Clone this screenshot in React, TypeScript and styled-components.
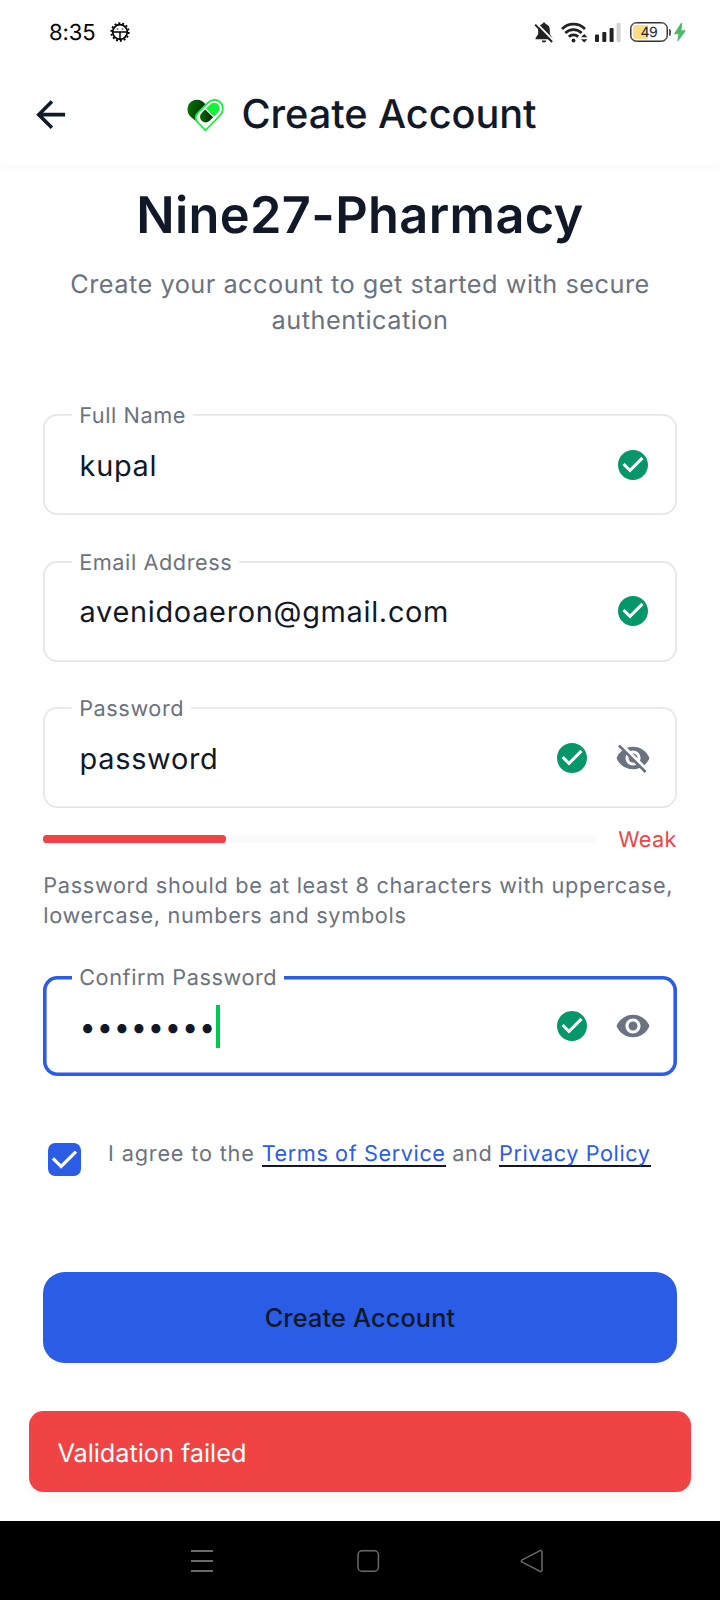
import React from 'react';
import styled, { createGlobalStyle } from 'styled-components';
import { MdArrowBack, MdCheckCircle, MdVisibility, MdVisibilityOff } from 'react-icons/md';

const ink = '#111827';
const muted = '#6b7280';
const blue = '#2a5ce6';
const red = '#f04444';
const green = '#059669';
const surface = '#ffffff';

const GlobalStyle = createGlobalStyle`
  * { box-sizing: border-box; }
  body {
    margin: 0;
    background: ${surface};
    font-family: Inter, "Liberation Sans", sans-serif;
    font-weight: 400;
    color: ${ink};
    text-rendering: geometricPrecision;
  }
`;

const Screen = styled.div`
  width: 720px;
  height: 1600px;
  display: flex;
  flex-direction: column;
  overflow: hidden;
  background: ${surface};
`;

const StatusBar = styled.header`
  height: 64px;
  flex: none;
  display: flex;
  align-items: center;
  justify-content: space-between;
  padding: 0 34px 0 49px;
  color: #000;
`;

const StatusGroup = styled.div<{ $gap: number }>`
  display: flex;
  align-items: center;
  gap: ${p => p.$gap}px;
`;

const Clock = styled.span`
  font-size: 22px;
  letter-spacing: -0.1px;
  padding-top: 1px;
`;

const AppBar = styled.div`
  height: 101px;
  flex: none;
  display: grid;
  grid-template-columns: 100px 1fr 100px;
  align-items: center;
  background: ${surface};
  box-shadow: 0 4px 6px rgba(0, 0, 0, 0.025);
`;

const BackButton = styled.button`
  display: flex;
  margin: 0 0 0 28.6px;
  padding: 0;
  border: 0;
  background: none;
  color: ${ink};
`;

const Brand = styled.div`
  display: flex;
  align-items: center;
  justify-content: center;
  padding-left: 4px;
  padding-top: 1px;
  gap: 17px;
`;

const BarTitle = styled.h1`
  margin: -2px 0 0;
  font-size: 39.7px;
  line-height: 50px;
  font-weight: 500;
  letter-spacing: -0.05px;
`;

const Form = styled.main`
  flex: 1;
  display: flex;
  flex-direction: column;
  padding: 21px 43.3px 0;
`;

const Heading = styled.h2`
  margin: 0;
  text-align: center;
  font-size: 50.5px;
  line-height: 60px;
  font-weight: 600;
  letter-spacing: 0.35px;
`;

const Intro = styled.p`
  margin: 20.5px 0 75.5px;
  text-align: center;
  font-size: 25.3px;
  line-height: 36px;
  letter-spacing: 0.5px;
  color: ${muted};
`;

const Field = styled.div<{ $focused?: boolean }>`
  position: relative;
  flex: none;
  height: ${p => (p.$focused ? 100 : 101)}px;
  display: flex;
  align-items: center;
  padding: 0 25.3px 0 36.3px;
  border-radius: 14.4px;
  box-shadow: inset 0 0 0 ${p => (p.$focused ? `3.6px ${blue}` : '1.8px #e5e7eb')};
`;

const FieldLabel = styled.label`
  position: absolute;
  top: -11px;
  left: 28.7px;
  padding: 0 7.2px;
  background: ${surface};
  font-size: 21.7px;
  line-height: 26px;
  letter-spacing: 0.57px;
  color: ${muted};
`;

const Value = styled.span`
  flex: 1;
  display: flex;
  align-items: center;
  padding-top: 2px;
  font-size: 28.9px;
  line-height: 40px;
  letter-spacing: 0.7px;
`;

const Dots = styled.span`
  letter-spacing: 0.8px;
`;

const Caret = styled.i`
  width: 3.6px;
  height: 43px;
  margin-top: -2px;
  background: #00c853;
`;

const FieldIcons = styled.span`
  display: flex;
  align-items: center;
  gap: 25px;
  color: ${muted};
`;

const ValidIcon = styled(MdCheckCircle)`
  color: ${green};
`;

const Gap = styled.div<{ $size: number }>`
  flex: none;
  height: ${p => p.$size}px;
`;

const Strength = styled.div`
  display: flex;
  align-items: center;
  justify-content: space-between;
  height: 26px;
`;

const Track = styled.div`
  width: 553px;
  height: 7.6px;
  border-radius: 3.6px;
  background: #fafafa;
`;

const Level = styled.div`
  width: 33%;
  height: 100%;
  border-radius: 3.6px;
  background: ${red};
`;

const StrengthText = styled.span`
  padding-top: 1px;
  font-size: 21.7px;
  letter-spacing: 0.3px;
  color: ${red};
`;

const Hint = styled.p`
  margin: 19px -8px 0 0;
  font-size: 21.7px;
  line-height: 30px;
  letter-spacing: 0.67px;
  color: ${muted};
`;

const Agreement = styled.div`
  display: flex;
  align-items: flex-start;
  padding-left: 5.2px;
`;

const Checkbox = styled.span`
  width: 32.6px;
  height: 32.6px;
  display: flex;
  border-radius: 7.2px;
  background: ${blue};
`;

const AgreementText = styled.span`
  margin: -2px 0 0 27px;
  font-size: 21.7px;
  line-height: 26px;
  letter-spacing: 0.58px;
  color: ${muted};
`;

const AgreementLead = styled.span`
  letter-spacing: 0.82px;
`;

const Link = styled.a`
  display: inline-block;
  height: 26px;
  color: ${blue};
  border-bottom: 2px solid ${ink};
`;

const Submit = styled.button`
  flex: none;
  height: 91px;
  padding: 0;
  border: 0;
  border-radius: 21.6px;
  background: ${blue};
  color: ${ink};
  font: 500 25.3px Inter, "Liberation Sans", sans-serif;
  letter-spacing: 0.15px;
`;

const Snackbar = styled.div`
  flex: none;
  display: flex;
  align-items: center;
  height: 81px;
  margin: 0 -14.4px;
  padding: 3px 28.5px 0;
  border-radius: 14.4px;
  background: ${red};
  color: #fefefe;
  font-size: 25.3px;
  letter-spacing: -0.04px;
  box-shadow: 0 6px 12px rgba(0, 0, 0, 0.03);
`;

const NavBar = styled.nav`
  flex: none;
  height: 79px;
  display: flex;
  align-items: center;
  padding-left: 190px;
  gap: 142px;
  background: #000;

  svg:last-child { margin-left: -2px; }
`;

const GearIcon = () => (
  <svg width="20" height="20" viewBox="0 0 20 20" fill="none" stroke="#000">
    <circle cx="10" cy="10" r="7.3" strokeWidth="1.7" />
    <circle cx="10" cy="10" r="8.8" strokeWidth="1.7" strokeDasharray="2 1.949" />
    <path d="M2.6 9.900h14.8M10 9.900v8" strokeWidth="1.5" />
    <path d="M6.700 7h1.6M11.700 7h1.6" strokeWidth="1" />
  </svg>
);

const MutedBellIcon = () => (
  <svg width="20" height="21" viewBox="0 0 20 21">
    <path d="M10 .5c1 0 1.5.6 1.5 1.5 2.8.6 4.3 2.8 4.3 5.7v4.3l2.7 4.200v1H1.500v-1l2.700-4.200V7.700C4.200 4.800 5.700 2.600 8.500 2 8.500 1.100 9 .5 10 .5zM7.800 18.500h4.400a2.200 2 0 0 1-4.400 0z" fill="#222" />
    <path d="M2.600 1.400l17 17.400" stroke={surface} strokeWidth="2" />
    <path d="M1.100 2.600l17 17.400" stroke="#222" strokeWidth="2" />
  </svg>
);

const WifiIcon = () => (
  <svg width="27" height="21" viewBox="0 0 27 21" fill="none" stroke="#222">
    <path d="M1 7a16 16 0 0 1 23 0M4.300 11a11.500 11.500 0 0 1 16.400 0M7.800 14.700a6.800 6.800 0 0 1 9.400 0" strokeWidth="2.700" />
    <circle cx="12.500" cy="18.500" r="1.900" fill="#222" stroke="none" />
    <path d="M18.800 12h8.200v9h-8.200z" fill={surface} stroke="none" />
    <path d="M20 15.300l3.200-3.400 3.200 3.400zM20 17.200l3.200 3.400 3.200-3.400z" fill="#222" stroke="none" />
  </svg>
);

const SignalIcon = () => (
  <svg width="26" height="19" viewBox="0 0 26 19" fill="#222">
    <rect x="0" y="11.500" width="4" height="7.500" rx="1" />
    <rect x="7.300" y="9" width="4" height="10" rx="1" />
    <rect x="14.600" y="5" width="4" height="14" rx="1" />
    <rect x="21.600" y="0" width="4" height="19" rx="1" fill="#d2d2d2" />
  </svg>
);

const Battery = styled.span`
  position: relative;
  display: flex;
  align-items: center;
  justify-content: center;
  width: 38px;
  height: 20px;
  margin: 0 -1px 0 1px;
  border: 1px solid #333;
  border-radius: 6.5px;
  box-shadow: inset 0 0 0 0.5px #333;
  background: linear-gradient(to right, #fedc86 0 48%, ${surface} 48%) content-box;
  padding: 2.3px;
  font: 400 14px Inter, "Liberation Sans", sans-serif;
  letter-spacing: -0.6px;
  color: #222;

  &::after {
    content: '';
    position: absolute;
    right: -4px;
    top: 5.5px;
    width: 2px;
    height: 7px;
    border-radius: 0 2px 2px 0;
    background: #555;
  }
`;

const BoltIcon = () => (
  <svg width="12" height="19" viewBox="0 0 12 19" fill="#4cb96b">
    <path d="M6.800.3L.2 10.500q-.2.700.5.700h3.700L3.300 17.800q.1.900.9.300L11.700 8q.2-.7-.5-.7H7.400L8.300.8Q7.900-.5 6.800.3z" />
  </svg>
);

const PillHeartIcon = () => (
  <svg width="37" height="33" viewBox="0 0 37 33">
    <defs>
      <linearGradient id="leaf" x1="0" y1="0" x2="1" y2=".3">
        <stop offset="0" stopColor="#087808" />
        <stop offset="1" stopColor="#023402" />
      </linearGradient>
      <linearGradient id="capsule" x1="0" y1="0" x2="1" y2="1">
        <stop offset="0" stopColor="#0a7a0a" />
        <stop offset="1" stopColor="#012801" />
      </linearGradient>
    </defs>
    <path d="M18.300 5C14-.8 6.500-.3 3 3.800-.8 8.400.1 14 3.400 17.500L10 23z" fill="url(#leaf)" />
    <path d="M18.500 31.300L11.300 24Q6 18.700 11.300 13.300L20.800 3.800C25-.3 30.500.2 33.300 3.200 37 7 36.500 12.600 33 16.500z" fill="#fff" stroke="#10ef35" strokeWidth="1.700" />
    <g transform="rotate(-45 22.700 13.800)">
      <path d="M21.900 8.200H16.900a5.600 5.600 0 0 0 0 11.200H21.900z" fill="url(#capsule)" />
      <path d="M23.200 8.200H29a5.600 5.600 0 0 1 0 11.200H23.200z" fill="#12f236" />
    </g>
  </svg>
);

const CheckMark = () => (
  <svg width="32.600" height="32.600" viewBox="0 0 32.600 32.600" fill="none" stroke="#fefefe" strokeWidth="3.200">
    <path d="M4.900 15.300l8.200 8.200 14.900-14.900" />
  </svg>
);

const MenuGlyph = () => (
  <svg width="24" height="24" viewBox="0 0 24 24" stroke="#6a6a6a" strokeWidth="2">
    <path d="M1 2h22M1 12h22M1 22h22" />
  </svg>
);

const HomeGlyph = () => (
  <svg width="24" height="24" viewBox="0 0 24 24" fill="none" stroke="#6a6a6a" strokeWidth="1.500">
    <rect x="2" y="1.800" width="20.400" height="20.400" rx="4" />
  </svg>
);

const BackGlyph = () => (
  <svg width="24" height="24" viewBox="0 0 24 24" fill="none" stroke="#6a6a6a" strokeWidth="1.500" strokeLinejoin="round">
    <path d="M2.200 10.900L19.600 1.800Q22 1 22 3V21Q22 23 19.600 22.200L2.200 13.100Q.6 12 2.200 10.900z" />
  </svg>
);

type TextFieldProps = {
  label: string;
  value: string;
  focused?: boolean;
  toggle?: React.ReactNode;
};

const TextField = ({ label, value, focused, toggle }: TextFieldProps) => (
  <Field $focused={focused}>
    <FieldLabel>{label}</FieldLabel>
    <Value>
      {focused ? <Dots>{value}</Dots> : value}
      {focused && <Caret />}
    </Value>
    <FieldIcons>
      <ValidIcon size={36} />
      {toggle}
    </FieldIcons>
  </Field>
);

export default function App() {
  return (
    <Screen>
      <GlobalStyle />
      <StatusBar>
        <StatusGroup $gap={14}>
          <Clock>8:35</Clock>
          <GearIcon />
        </StatusGroup>
        <StatusGroup $gap={7.3}>
          <MutedBellIcon />
          <WifiIcon />
          <SignalIcon />
          <Battery>49</Battery>
          <BoltIcon />
        </StatusGroup>
      </StatusBar>
      <AppBar>
        <BackButton aria-label="Back">
          <MdArrowBack size={43.3} />
        </BackButton>
        <Brand>
          <PillHeartIcon />
          <BarTitle>Create Account</BarTitle>
        </Brand>
      </AppBar>
      <Form>
        <Heading>Nine27-Pharmacy</Heading>
        <Intro>Create your account to get started with secure authentication</Intro>
        <TextField label="Full Name" value="kupal" />
        <Gap $size={45.5} />
        <TextField label="Email Address" value="avenidoaeron@gmail.com" />
        <Gap $size={45.5} />
        <TextField label="Password" value="password" toggle={<MdVisibilityOff size={36} />} />
        <Gap $size={18} />
        <Strength>
          <Track>
            <Level />
          </Track>
          <StrengthText>Weak</StrengthText>
        </Strength>
        <Hint>Password should be at least 8 characters with uppercase, lowercase, numbers and symbols</Hint>
        <Gap $size={45} />
        <TextField label="Confirm Password" value="••••••••" focused toggle={<MdVisibility size={36} />} />
        <Gap $size={67} />
        <Agreement>
          <Checkbox>
            <CheckMark />
          </Checkbox>
          <AgreementText>
            <AgreementLead>I agree to the </AgreementLead>
            <Link>Terms of Service</Link> and <Link>Privacy Policy</Link>
          </AgreementText>
        </Agreement>
        <Gap $size={96.5} />
        <Submit>Create Account</Submit>
        <Gap $size={48} />
        <Snackbar>Validation failed</Snackbar>
      </Form>
      <NavBar>
        <MenuGlyph />
        <HomeGlyph />
        <BackGlyph />
      </NavBar>
    </Screen>
  );
}
